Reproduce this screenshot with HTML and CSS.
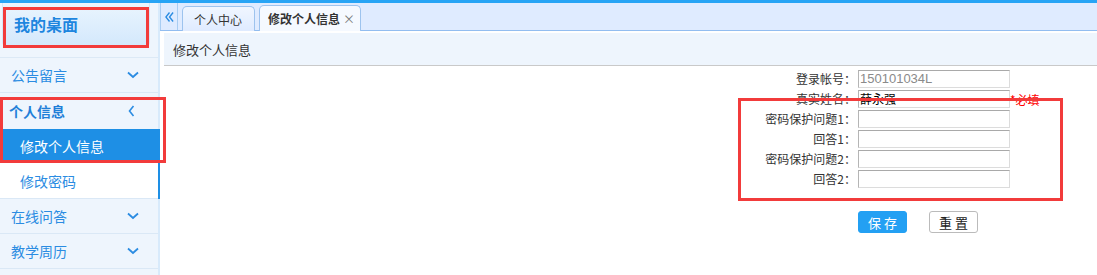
FILE: index.html
```html
<!DOCTYPE html>
<html lang="zh">
<head>
<meta charset="utf-8">
<title>修改个人信息</title>
<link rel="stylesheet" href="styles.css">
</head>
<body>
<div class="topline"></div>
<div class="app">
  <aside class="side">
    <div class="side-top"><div class="brand">我的桌面</div></div>
    <div class="menu-row"><span>公告留言</span><svg class="chev" viewBox="0 0 12 8"><path d="M1 1.5 L6 6 L11 1.5" /></svg></div>
    <div class="menu-row open"><span>个人信息</span><svg class="chev-l" viewBox="0 0 7 12"><path d="M5.5 1 L1.5 6 L5.5 11" /></svg></div>
    <div class="sub">
      <div class="sub-row active">修改个人信息</div>
      <div class="sub-row">修改密码</div>
    </div>
    <div class="menu-row"><span>在线问答</span><svg class="chev" viewBox="0 0 12 8"><path d="M1 1.5 L6 6 L11 1.5" /></svg></div>
    <div class="menu-row"><span>教学周历</span><svg class="chev" viewBox="0 0 12 8"><path d="M1 1.5 L6 6 L11 1.5" /></svg></div>
  </aside>
  <main class="main">
    <div class="tabbar">
      <div class="collapse"><svg viewBox="0 0 10 12"><path d="M5 1 L1 6 L5 11 M9 1 L5 6 L9 11" /></svg></div>
      <div class="tab">个人中心</div>
      <div class="tab current">修改个人信息<span class="x">×</span></div>
    </div>
    <div class="panel-head">修改个人信息</div>
    <div class="form">
      <label>登录帐号：</label><div class="inp ro">150101034L</div><div></div>
      <label>真实姓名：</label><div class="inp name">薛永强</div><div class="req">*必填</div>
      <label>密码保护问题1：</label><div class="inp"></div><div></div>
      <label>回答1：</label><div class="inp"></div><div></div>
      <label>密码保护问题2：</label><div class="inp"></div><div></div>
      <label>回答2：</label><div class="inp"></div><div></div>
      <div></div>
      <div class="btns"><button class="btn save">保 存</button><button class="btn reset">重 置</button></div>
      <div></div>
    </div>
  </main>
</div>
<div class="mark m1"></div>
<div class="mark m2"></div>
<div class="mark m3"></div>
</body>
</html>
```
FILE: styles.css
```css
* { box-sizing: border-box; }
html, body { margin: 0; padding: 0; }
body {
  width: 1097px; height: 275px; overflow: hidden; background: #fff;
  font-family: "Noto Sans CJK SC", "Liberation Sans", sans-serif;
  position: relative;
}
.topline { height: 3px; background: #27a4f5; }
.app { display: flex; height: 272px; }
.side {
  width: 160px; background: #eef5fd; border-right: 2px solid #d8eafb;
  display: flex; flex-direction: column;
}
.side-top { padding: 0 8px 10px 2px; border-bottom: 1px solid #dce9f6; }
.brand {
  height: 44px; border-radius: 0 0 5px 5px;
  background: linear-gradient(#eaf5fe, #d3e8fc);
  border: 1px solid #d6e7f8; border-top: none;
  color: #1e86df; font-weight: bold; font-size: 16px;
  display: flex; align-items: center; padding-left: 11px; padding-bottom: 2px;
}
.menu-row {
  height: 35px; flex-shrink: 0; border-bottom: 1px solid #dae8f6;
  display: flex; align-items: center; justify-content: space-between;
  padding: 0 19px 0 11px; color: #2b8ce2; font-size: 14px;
}
.menu-row.open { color: #1f7fd8; font-weight: bold; height: 36px; padding-left: 9px; border-bottom: none; }
.chev { width: 12px; height: 8px; fill: none; stroke: #2b8ce2; stroke-width: 1.8; }
.chev-l { width: 7px; height: 12px; fill: none; stroke: #2b8ce2; stroke-width: 1.6; margin-right: 4px; }
.sub { margin-right: -2px; border-right: 2px solid #1e8fe5; flex-shrink: 0; }
.sub-row { height: 35px; display: flex; align-items: center; padding-left: 20px; font-size: 14px; color: #2b8ce2; background: #fff; border-bottom: 1px solid #dae8f6; }
.sub-row.active { background: #1e8fe5; color: #fff; height: 35px; border-bottom: 1px solid #fff; }
.main { flex: 1; display: flex; flex-direction: column; }
.tabbar {
  height: 28px; background: #dfebff; border-bottom: 1px solid #92bdf0;
  display: flex; align-items: flex-end; gap: 4px;
}
.collapse {
  width: 18px; height: 27px; border: 1px solid #a9cdf3; border-bottom: none; border-top: none;
  display: flex; align-items: center; justify-content: center; background: #dfebff;
  align-self: flex-start;
}
.collapse svg { width: 9px; height: 12px; fill: none; stroke: #2b8ce2; stroke-width: 1.5; }
.tab {
  height: 25px; padding: 0 12px 0 11px; border: 1px solid #9dc3ee; border-bottom: none;
  border-radius: 5px 5px 0 0; background: linear-gradient(#f0f6ff, #dfebff);
  font-size: 12px; color: #333; display: flex; align-items: center;
  margin-bottom: -1px;
}
.tab.current { background: #f5f9ff; font-weight: bold; padding: 0 5px 0 8px; height: 26px; }
.tab .x { font-weight: normal; color: #777; font-size: 12px; margin-left: 3px; }
.panel-head {
  margin: 2px 0 0 4px; height: 33px; background: #eef5fd; border-bottom: 1px solid #c9c9c9;
  font-size: 13px; color: #333; display: flex; align-items: center; padding-left: 9px;
}
.form {
  display: grid; grid-template-columns: 1fr 152px 87px; row-gap: 2px;
  padding-top: 4px; font-size: 12px; color: #333; align-items: center;
}
.form label { text-align: right; padding-right: 2px; line-height: 18px; }
.inp {
  height: 18px; border: 1px solid #dcdcdc; border-top-color: #a9a9a9; border-left-color: #b5b5b5;
  font-size: 13px; line-height: 16px; padding-left: 1px; color: #000;
  font-family: "Liberation Sans", "Noto Sans CJK SC", sans-serif;
}
.inp.ro { color: #8a8a8a; }
.inp.name { font-family: "Noto Sans CJK SC", sans-serif; font-size: 12px; }
.req { color: #f00; font-size: 12px; }
.btns { display: flex; gap: 22px; margin-top: 21px; }
.btn {
  width: 49px; height: 22px; border-radius: 3px; font-size: 13px; padding: 0;
  font-family: "Noto Sans CJK SC", sans-serif; cursor: pointer;
}
.btn.save { background: #23a0f3; color: #fff; border: 1px solid #23a0f3; }
.btn.reset { background: #fff; color: #222; border: 1px solid #bbb; }
.mark { position: absolute; border: 3px solid #f23b3b; pointer-events: none; }
.m1 { left: 3px; top: 7px; width: 146px; height: 41px; }
.m2 { left: 0; top: 97px; width: 166px; height: 66px; }
.m3 { left: 738px; top: 98px; width: 325px; height: 103px; }
```
